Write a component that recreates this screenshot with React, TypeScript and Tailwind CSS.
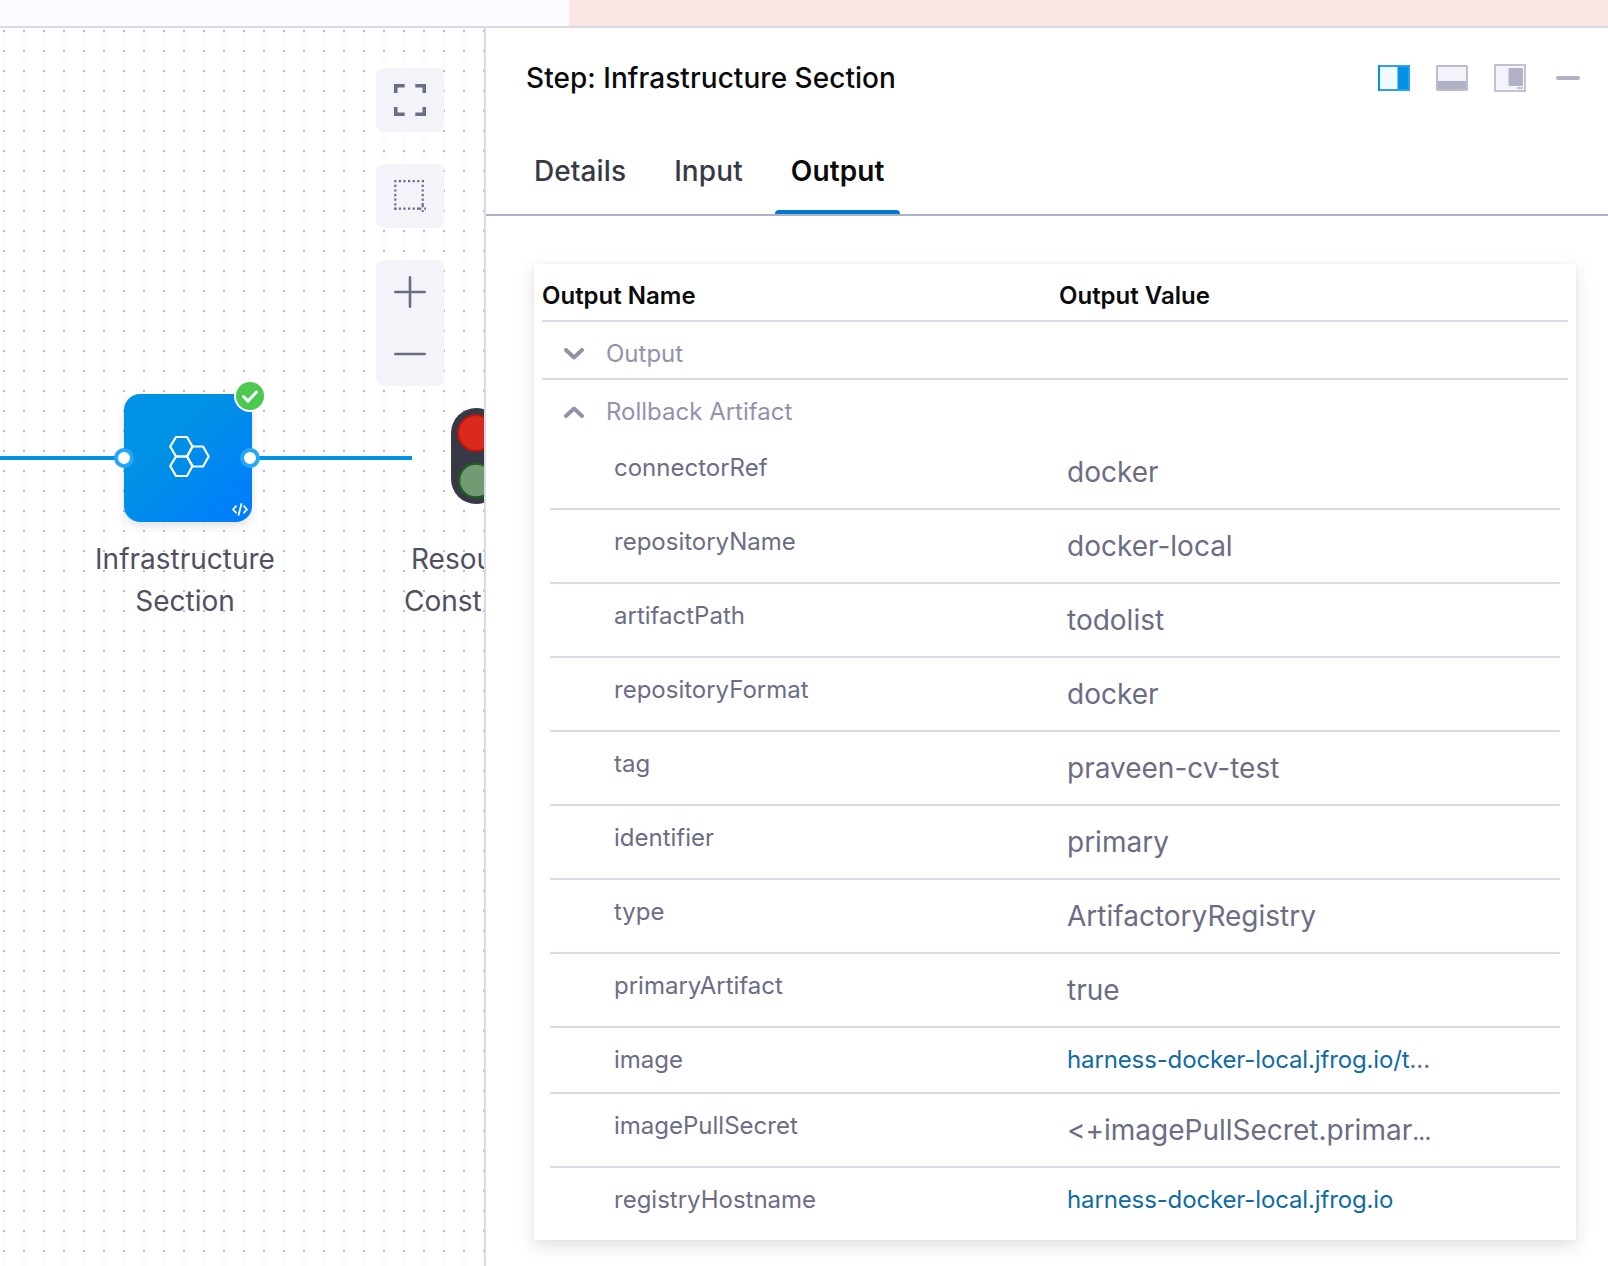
import React from "react";

type OutputRow = { name: string; value: string; link?: boolean; ellipsis?: boolean };

const rows: OutputRow[] = [
  { name: "connectorRef", value: "docker" },
  { name: "repositoryName", value: "docker-local" },
  { name: "artifactPath", value: "todolist" },
  { name: "repositoryFormat", value: "docker" },
  { name: "tag", value: "praveen-cv-test" },
  { name: "identifier", value: "primary" },
  { name: "type", value: "ArtifactoryRegistry" },
  { name: "primaryArtifact", value: "true" },
  { name: "image", value: "harness-docker-local.jfrog.io/t", link: true, ellipsis: true },
  { name: "imagePullSecret", value: "<+imagePullSecret.primar", ellipsis: true },
  { name: "registryHostname", value: "harness-docker-local.jfrog.io", link: true },
];

function CanvasControls() {
  return (
    <div className="absolute left-[376px] top-10 flex w-[68px] flex-col gap-8">
      <button className="flex h-16 items-center justify-center rounded-lg bg-[#f3f3fa]">
        <svg width="32" height="32" viewBox="0 0 32 32" fill="none" stroke="#6b6d85" strokeWidth="3.5">
          <path d="M10.7 1.75H1.75V9M21.3 1.75h8.95V9M1.75 23v7.25h8.95M30.25 23v7.25H21.3" />
        </svg>
      </button>
      <button className="flex h-16 items-center justify-center rounded-lg bg-[#f3f3fa]">
        <svg width="32" height="32" viewBox="0 0 32 32" fill="none" stroke="#6b6d85" strokeWidth="2.2">
          <path d="M0.2 1.2H30.4" strokeDasharray="2.2 2.4" />
          <path d="M1.3 4.8V30" strokeDasharray="2.2 2.4" />
          <path d="M28.7 4.8V22" strokeDasharray="2.2 2.4" />
          <path d="M0.2 28.7H23" strokeDasharray="2.2 2.4" />
          <path d="M28.7 23v4.2M28.7 30.2V32M23 28.7h4.2M30.2 28.7H32" />
        </svg>
      </button>
      <div className="flex h-[126px] flex-col items-center rounded-lg bg-[#f3f3fa]">
        <button className="flex h-16 items-center justify-center">
          <svg width="32" height="32" viewBox="0 0 32 32" stroke="#6b6d85" strokeWidth="2.6" strokeLinecap="round">
            <path d="M16 1.3v29.4M1.3 16h29.4" />
          </svg>
        </button>
        <button className="flex h-[62px] items-center justify-center">
          <svg width="32" height="32" viewBox="0 0 32 32" stroke="#6b6d85" strokeWidth="2.6" strokeLinecap="round">
            <path d="M1.3 15h29.4" />
          </svg>
        </button>
      </div>
    </div>
  );
}

function Port({ className }: { className: string }) {
  return <span className={`absolute top-[54px] size-5 rounded-full border-4 border-[#25a6f7] bg-white ${className}`} />;
}

function InfrastructureNode() {
  return (
    <>
      <div className="absolute left-0 top-[428px] h-1 w-[412px] bg-[#0092e4]" />
      <div className="absolute left-[124px] top-[366px] size-32 rounded-2xl bg-[linear-gradient(135deg,#0092e4_0%,#0092e4_35%,#007bff_100%)] shadow-[0_4px_8px_rgba(96,97,112,0.18)]">
        <svg className="absolute left-11 top-[41px]" width="42" height="42" viewBox="0 0 42 42" fill="none" stroke="white" strokeWidth="2.2" strokeLinejoin="round">
          <path d="M8 2h11L24.500 11.500l-5.500 10H8L2.200 11.500Z" />
          <path d="M8 21.500h11L24.500 31l-5.500 10H8L2.200 31Z" />
          <path d="M24.500 11.500h10.500L40.700 21.500l-5.700 10H24.500L19 21.500Z" />
        </svg>
        <svg className="absolute left-[108px] top-[109px]" width="16" height="13" viewBox="0 0 16 13" fill="none" stroke="white" strokeWidth="1.8" strokeLinecap="round" strokeLinejoin="round">
          <path d="M4 3.200L1 6.500l3 3.200M12 3.200l3 3.300-3 3.200M9.400 1L6.600 12" />
        </svg>
        <Port className="-left-[10px]" />
        <Port className="left-[116px]" />
        <svg className="absolute left-[110px] -top-[14px]" width="32" height="32" viewBox="0 0 32 32">
          <circle cx="16" cy="16" r="16" fill="white" />
          <circle cx="16" cy="16" r="14" fill="#4dc952" />
          <path d="M9.500 16.500l4.500 4.500 8.500-9" fill="none" stroke="white" strokeWidth="3" strokeLinecap="round" />
        </svg>
      </div>
      <div className="absolute left-[85px] top-[510px] w-[200px] text-center text-[28px] leading-[42px] text-[#4f5162]">
        Infrastructure Section
      </div>
    </>
  );
}

function ConstraintNode() {
  return (
    <>
      <svg className="absolute left-[451px] top-[380px]" width="50" height="96" viewBox="0 0 50 96">
        <rect width="50" height="96" rx="25" fill="#383946" />
        <circle cx="25" cy="25" r="18" fill="#da291d" stroke="#b41710" strokeWidth="2" />
        <circle cx="25" cy="72.500" r="17" fill="#729b74" stroke="#215c24" strokeWidth="2.400" />
      </svg>
      <div className="absolute left-[404px] top-[510px] flex w-[140px] flex-col text-[28px] leading-[42px] text-[#4f5162]">
        <span className="pl-[7px]">Resource</span>
        <span>Const...</span>
      </div>
    </>
  );
}

function PanelHeader() {
  return (
    <header className="flex h-[100px] items-center justify-between pl-10 pr-7">
      <h1 className="text-[28px] font-medium leading-[42px] tracking-[0.04px] text-[#0b0b0d]">Step: Infrastructure Section</h1>
      <div className="flex items-center">
        <svg className="mr-[26px]" width="32" height="28" viewBox="0 0 32 28">
          <rect x="1" y="2" width="30" height="24" fill="#effbff" stroke="#2e9fea" strokeWidth="2" />
          <path d="M19.500 3H30v22H19.500Z" fill="#0092e4" />
          <path d="M1 1.500v25" stroke="#0092e4" strokeWidth="2" />
        </svg>
        <svg className="mr-[26px]" width="32" height="28" viewBox="0 0 32 28">
          <rect x="1" y="2" width="30" height="24" rx="0.500" fill="#f3f3fa" stroke="#bcbccf" strokeWidth="2" />
          <path d="M2 17h28v8H2Z" fill="#b0b1c4" />
        </svg>
        <svg className="mr-[30px]" width="32" height="28" viewBox="0 0 32 28">
          <rect x="1" y="1" width="30" height="26" fill="#f3f3fa" stroke="#c2c2d2" strokeWidth="2" />
          <rect x="14.500" y="4" width="14.500" height="18" rx="1.500" fill="#b0b1c4" />
          <path d="M23 24h6" stroke="#c6c6d5" strokeWidth="2" />
        </svg>
        <span className="h-1 w-6 rounded-sm bg-[#b0b1c4]" />
      </div>
    </header>
  );
}

function Tabs() {
  return (
    <nav className="flex h-[88px] gap-4 border-b-2 border-[#b0b1c4] pl-8 text-[28px] leading-[42px] tracking-[0.1px] text-[#383946]">
      <span className="px-4 pt-[22px] font-medium">Details</span>
      <span className="px-4 pt-[22px] font-medium">Input</span>
      <span className="flex flex-col justify-between pt-[22px] font-semibold text-[#0b0b0d]">
        <span className="px-4">Output</span>
        <span className="h-1 rounded-t bg-[#0278d5]" />
      </span>
    </nav>
  );
}

function Chevron({ up }: { up?: boolean }) {
  return (
    <svg width="20" height="12" viewBox="0 0 20 12" fill="none" stroke="#9293ab" strokeWidth="4" strokeLinecap="round" strokeLinejoin="round">
      <path d={up ? "M2 10l8-7.500 8 7.500" : "M2 2l8 7.500L18 2"} />
    </svg>
  );
}

function OutputTable() {
  return (
    <section className="ml-12 mr-8 mt-12 h-[976px] bg-white p-2 text-[24px] leading-9 shadow-[0_0_4px_rgba(40,41,61,0.04),0_6px_16px_rgba(96,97,112,0.18)]">
      <div className="flex h-[50px] border-b-2 border-[#d9dae5] pt-1.5 font-semibold text-[#0b0b0d]">
        <span className="w-[517px]">Output Name</span>
        <span>Output Value</span>
      </div>
      <div className="flex h-[58px] items-center gap-[22px] border-b-2 border-[#d9dae5] pl-[22px] pt-[7px] text-[#9293ab]">
        <Chevron />
        <span>Output</span>
      </div>
      <div className="flex h-14 items-center gap-[22px] pl-[22px] pt-2 text-[#9293ab]">
        <Chevron up />
        <span>Rollback Artifact</span>
      </div>
      <div className="px-2 text-[#6b6d85]">
        {rows.map((row) => (
          <div key={row.name} className="flex border-b-2 border-[#d9dae5] py-[14px] pl-16 last:border-b-0">
            <span className="w-[453px]">{row.name}</span>
            {row.link ? (
              <span className="tracking-[-0.13px]">
                <a className="text-[#106ba3]">{row.value}</a>
                {row.ellipsis && "..."}
              </span>
            ) : (
              <span className="h-11 text-[28px] leading-[44px]">
                {row.value}
                {row.ellipsis && <span className="text-[24px] tracking-[-0.8px]">...</span>}
              </span>
            )}
          </div>
        ))}
      </div>
    </section>
  );
}

export default function App() {
  return (
    <div className="flex h-[1266px] w-[1608px] flex-col overflow-hidden bg-white font-['Inter',sans-serif]">
      <div className="flex h-7 shrink-0 border-b-2 border-[#d9dae5]">
        <div className="w-[569px] bg-[#fafcff]" />
        <div className="flex-1 bg-[#fae6e4]" />
      </div>
      <div className="flex min-h-0 flex-1">
        <main className="relative w-[484px] overflow-hidden bg-[linear-gradient(90deg,#f8fcff_2px,transparent_2px)] bg-[length:20px_20px] bg-[position:3px_2px]">
          <div className="absolute inset-0 bg-[conic-gradient(from_270deg_at_2px_2px,#b4bcc4_90deg,transparent_90deg)] bg-[length:20px_20px] bg-[position:3px_2px]" />
          <InfrastructureNode />
          <ConstraintNode />
          <CanvasControls />
        </main>
        <aside className="flex flex-1 flex-col border-l-2 border-[#d9dae5] bg-white">
          <PanelHeader />
          <Tabs />
          <OutputTable />
        </aside>
      </div>
    </div>
  );
}
